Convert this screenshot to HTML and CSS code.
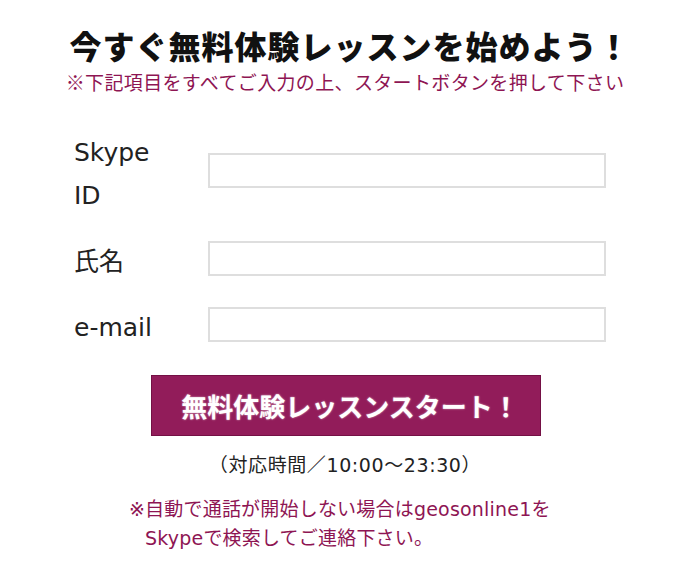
FILE: index.html
```html
<!DOCTYPE html>
<html lang="ja">
<head>
<meta charset="utf-8">
<title>無料体験レッスン</title>
<link rel="stylesheet" href="styles.css">
</head>
<body>
<main class="page">
  <h1 class="title">今すぐ無料体験レッスンを始めよう！</h1>
  <p class="lead">※下記項目をすべてご入力の上、スタートボタンを押して下さい</p>
  <form class="form">
    <label class="label" for="skype">Skype ID</label>
    <div class="field"><input class="input" id="skype" type="text"></div>
    <label class="label" for="name">氏名</label>
    <div class="field"><input class="input" id="name" type="text"></div>
    <label class="label" for="mail">e-mail</label>
    <div class="field"><input class="input" id="mail" type="text"></div>
  </form>
  <div class="actions">
    <button class="start" type="button">無料体験レッスンスタート！</button>
  </div>
  <p class="hours">（対応時間／10:00～23:30）</p>
  <p class="note">※自動で通話が開始しない場合はgeosonline1を<br>Skypeで検索してご連絡下さい。</p>
</main>
</body>
</html>
```
FILE: styles.css
```css
html, body {
  margin: 0;
  padding: 0;
  background: #ffffff;
}
body {
  font-family: "DejaVu Sans", "Noto Sans CJK JP", sans-serif;
  color: #222222;
}
.page {
  width: 700px;
  padding-top: 24px;
}
.title {
  margin: 0;
  text-align: center;
  font-family: "Noto Sans CJK JP", sans-serif;
  font-weight: 900;
  font-size: 32px;
  line-height: 42px;
  letter-spacing: 1px;
  color: #111111;
}
.lead {
  margin: 2px 0 0;
  padding-right: 10px;
  text-align: center;
  font-family: "Noto Sans CJK JP", sans-serif;
  font-size: 19px;
  line-height: 28px;
  letter-spacing: 0.35px;
  color: #8e1553;
}
.form {
  display: grid;
  grid-template-columns: 100px 398px;
  column-gap: 34px;
  margin: 20px 0 0 74px;
}
.label {
  font-size: 25px;
  line-height: 43px;
  padding: 15px 0 8px;
  color: #222222;
}
.field {
  display: flex;
  align-items: center;
}
.input {
  box-sizing: border-box;
  width: 398px;
  height: 35px;
  margin: 0;
  border: 2px solid #dedede;
  border-radius: 0;
  background: #ffffff;
}
.actions {
  display: flex;
  justify-content: flex-start;
  padding-left: 151px;
  margin-top: 18px;
}
.start {
  width: 390px;
  height: 61px;
  margin: 0;
  padding: 0 0 0 8px;
  background: #921c5a;
  border: 1px solid #741045;
  color: #ffffff;
  font-family: "Noto Sans CJK JP", sans-serif;
  font-weight: 700;
  font-size: 26px;
  letter-spacing: 0;
  text-shadow: 0 0 2px rgba(255,255,255,0.7);
  cursor: pointer;
}
.hours {
  margin: 16px 0 0;
  padding-right: 10px;
  text-align: center;
  font-size: 19px;
  line-height: 26px;
  letter-spacing: 0.6px;
  color: #222222;
}
.note {
  margin: 17px 0 0 129px;
  padding-left: 16px;
  text-indent: -16px;
  font-size: 19px;
  line-height: 29px;
  letter-spacing: 0.2px;
  color: #8e1553;
}
```
